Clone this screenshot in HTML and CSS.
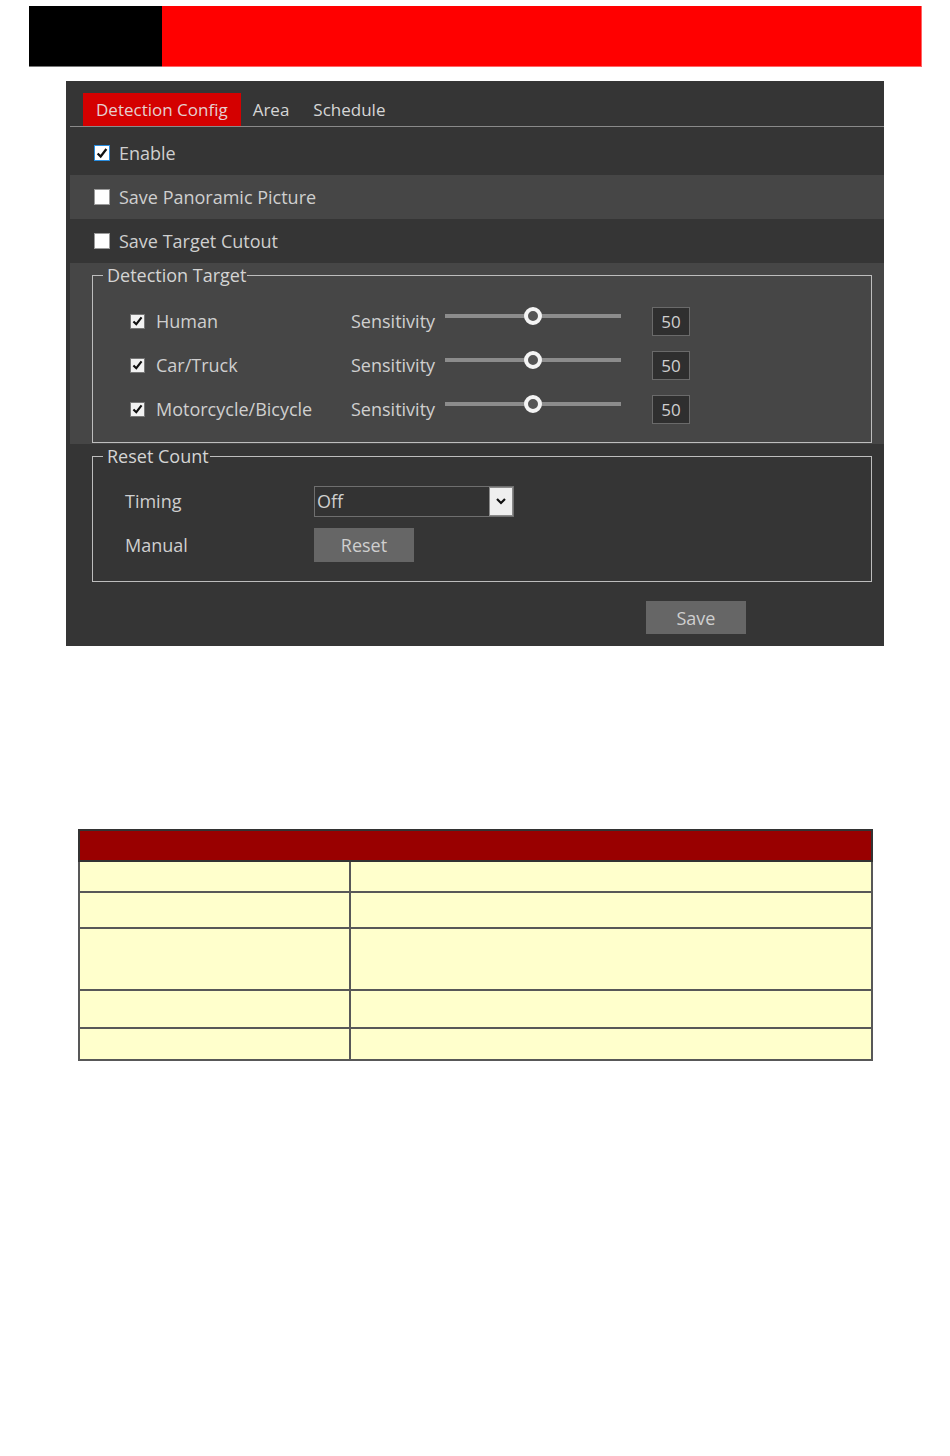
FILE: index.html
```html
<!DOCTYPE html>
<html lang="en">
<head>
    <meta charset="UTF-8">
    <meta name="viewport" content="width=device-width, initial-scale=1.0">
    <title>Detection Config</title>
    <link rel="stylesheet" href="styles.css">
</head>
<body>
    <div class="topbar">
        <div class="brand"></div>
        <div class="stripe"></div>
    </div>

    <div class="panel">
        <div class="tabs">
            <span class="tab active">Detection Config</span>
            <span class="tab">Area</span>
            <span class="tab">Schedule</span>
        </div>

        <div class="row">
            <span class="check focus">
                <svg viewBox="0 0 16 16"><path d="M3 8.5 L6.5 12 L13 3.5" /></svg>
            </span>
            <span class="label">Enable</span>
        </div>
        <div class="row alt">
            <span class="check"></span>
            <span class="label">Save Panoramic Picture</span>
        </div>
        <div class="row">
            <span class="check"></span>
            <span class="label">Save Target Cutout</span>
        </div>

        <div class="section alt">
            <fieldset class="group targets">
                <legend>Detection Target</legend>

                <div class="target">
                    <span class="check small">
                        <svg viewBox="0 0 16 16"><path d="M3 8.5 L6.5 12 L13 3.5" /></svg>
                    </span>
                    <span class="target-name">Human</span>
                    <span class="sens">Sensitivity</span>
                    <span class="slider"><span class="thumb" style="left: 50%"></span></span>
                    <span class="value">50</span>
                </div>
                <div class="target">
                    <span class="check small">
                        <svg viewBox="0 0 16 16"><path d="M3 8.5 L6.5 12 L13 3.5" /></svg>
                    </span>
                    <span class="target-name">Car/Truck</span>
                    <span class="sens">Sensitivity</span>
                    <span class="slider"><span class="thumb" style="left: 50%"></span></span>
                    <span class="value">50</span>
                </div>
                <div class="target">
                    <span class="check small">
                        <svg viewBox="0 0 16 16"><path d="M3 8.5 L6.5 12 L13 3.5" /></svg>
                    </span>
                    <span class="target-name">Motorcycle/Bicycle</span>
                    <span class="sens">Sensitivity</span>
                    <span class="slider"><span class="thumb" style="left: 50%"></span></span>
                    <span class="value">50</span>
                </div>
            </fieldset>
        </div>

        <div class="section">
            <fieldset class="group reset">
                <legend>Reset Count</legend>

                <div class="field">
                    <span class="field-name">Timing</span>
                    <div class="select">
                        <span class="select-text">Off</span>
                        <span class="select-arrow">
                            <svg viewBox="0 0 12 12"><path d="M2 4 L6 8 L10 4" /></svg>
                        </span>
                    </div>
                </div>
                <div class="field">
                    <span class="field-name">Manual</span>
                    <button class="btn">Reset</button>
                </div>
            </fieldset>
        </div>

        <div class="actions">
            <button class="btn">Save</button>
        </div>
    </div>

    <table class="spec">
        <tr><th colspan="2"></th></tr>
        <tr class="r1"><td class="key"></td><td></td></tr>
        <tr class="r2"><td class="key"></td><td></td></tr>
        <tr class="r3"><td class="key"></td><td></td></tr>
        <tr class="r4"><td class="key"></td><td></td></tr>
        <tr class="r5"><td class="key"></td><td></td></tr>
    </table>
</body>
</html>
```

FILE: styles.css
```css
body{
    margin: 0;
    background: #fff;
    font-family: "Open Sans", "Noto Sans", sans-serif;
}

/* header strip */
.topbar{
    display: flex;
    width: 893px;
    height: 61px;
    margin: 6px 0 0 29px;
}

.brand{
    width: 133px;
    background: #000;
    border-bottom: 1px solid #777;
}

.stripe{
    flex: 1;
    background: #f00;
    border-bottom: 1px solid #f66;
    border-right: 1px solid #f66;
}

/* settings panel */
.panel{
    width: 814px;
    margin: 14px 0 0 66px;
    padding: 12px 0 12px 4px;
    background: #353535;
    color: #cfcfcf;
    font-size: 18px;
}

.tabs{
    display: flex;
    align-items: stretch;
    height: 33px;
    padding-left: 13px;
    border-bottom: 1px solid #8a8a8a;
    margin-bottom: 4px;
}

.tab{
    display: flex;
    align-items: center;
    padding: 0 12px;
    font-size: 17px;
    color: #d6d6d6;
}

.tab.active{
    background: #d40000;
    color: #e6d0d0;
    padding: 0 13px;
}

.row{
    display: flex;
    align-items: center;
    height: 44px;
    padding-left: 24px;
}

.alt{
    background: #464646;
}

.check{
    display: inline-flex;
    align-items: center;
    justify-content: center;
    box-sizing: border-box;
    width: 16px;
    height: 16px;
    background: #fff;
    border: 1px solid #9a9a9a;
    margin-right: 9px;
}

.check.focus{
    border-color: #2a8ee0;
}

.check.small{
    width: 15px;
    height: 15px;
    background: #f2f2f2;
    border-color: #777;
    margin-right: 11px;
}

.check svg{
    width: 14px;
    height: 14px;
    fill: none;
    stroke: #111;
    stroke-width: 2.6;
}

/* group boxes */
.section{
    padding: 0 12px 1px 22px;
}

.group{
    margin: 0;
    padding: 0;
    border: 1px solid #bdbdbd;
}

.group legend{
    margin-left: 10px;
    padding: 0 1px 0 4px;
    font-size: 18px;
    color: #d4d4d4;
    line-height: 24px;
}

.targets{
    padding: 12px 0 11px;
}

.target{
    display: flex;
    align-items: center;
    height: 44px;
    padding-left: 37px;
}

.target-name{
    width: 195px;
}

.sens{
    width: 94px;
}

.slider{
    position: relative;
    width: 176px;
    height: 4px;
    margin-bottom: 10px;
    background: #8c8c8c;
}

.thumb{
    position: absolute;
    top: 50%;
    width: 10px;
    height: 10px;
    margin: -9px 0 0 -9px;
    border: 4px solid #f4f4f4;
    border-radius: 50%;
    background: #555;
}

.value{
    box-sizing: border-box;
    width: 38px;
    height: 29px;
    margin-left: 31px;
    border: 1px solid #6a6a6a;
    background: #2f2f2f;
    text-align: center;
    line-height: 27px;
    font-size: 17px;
}

.reset{
    padding: 11px 0 14px;
}

.field{
    display: flex;
    align-items: center;
    height: 44px;
    padding-left: 32px;
}

.field-name{
    width: 189px;
}

.select{
    display: flex;
    box-sizing: border-box;
    width: 200px;
    height: 31px;
    border: 1px solid #6f6f6f;
    background: #333;
}

.select-text{
    flex: 1;
    padding-left: 2px;
    line-height: 29px;
}

.select-arrow{
    display: flex;
    align-items: center;
    justify-content: center;
    width: 22px;
    background: #efefef;
    border: 1px solid #8a8a8a;
}

.select-arrow svg{
    width: 12px;
    height: 12px;
    fill: none;
    stroke: #111;
    stroke-width: 2.2;
}

.btn{
    width: 100px;
    height: 34px;
    padding: 0;
    border: 0;
    background: #666;
    color: #cfcfcf;
    font-family: inherit;
    font-size: 18px;
}

.actions{
    padding: 18px 0 0 576px;
}

.actions .btn{
    height: 33px;
}

/* table below the screenshot */
.spec{
    width: 795px;
    margin: 183px 0 0 78px;
    border-collapse: collapse;
    border: 2px solid #555;
}

.spec th{
    height: 27px;
    background: #990000;
    border: 2px solid #333;
}

.spec td{
    background: #ffffcc;
    border: 2px solid #585858;
    padding: 0;
}

.spec td.key{
    width: 269px;
}

.spec .r1 td{ height: 29px; }
.spec .r2 td{ height: 34px; }
.spec .r3 td{ height: 60px; }
.spec .r4 td{ height: 36px; }
.spec .r5 td{ height: 30px; }
```
